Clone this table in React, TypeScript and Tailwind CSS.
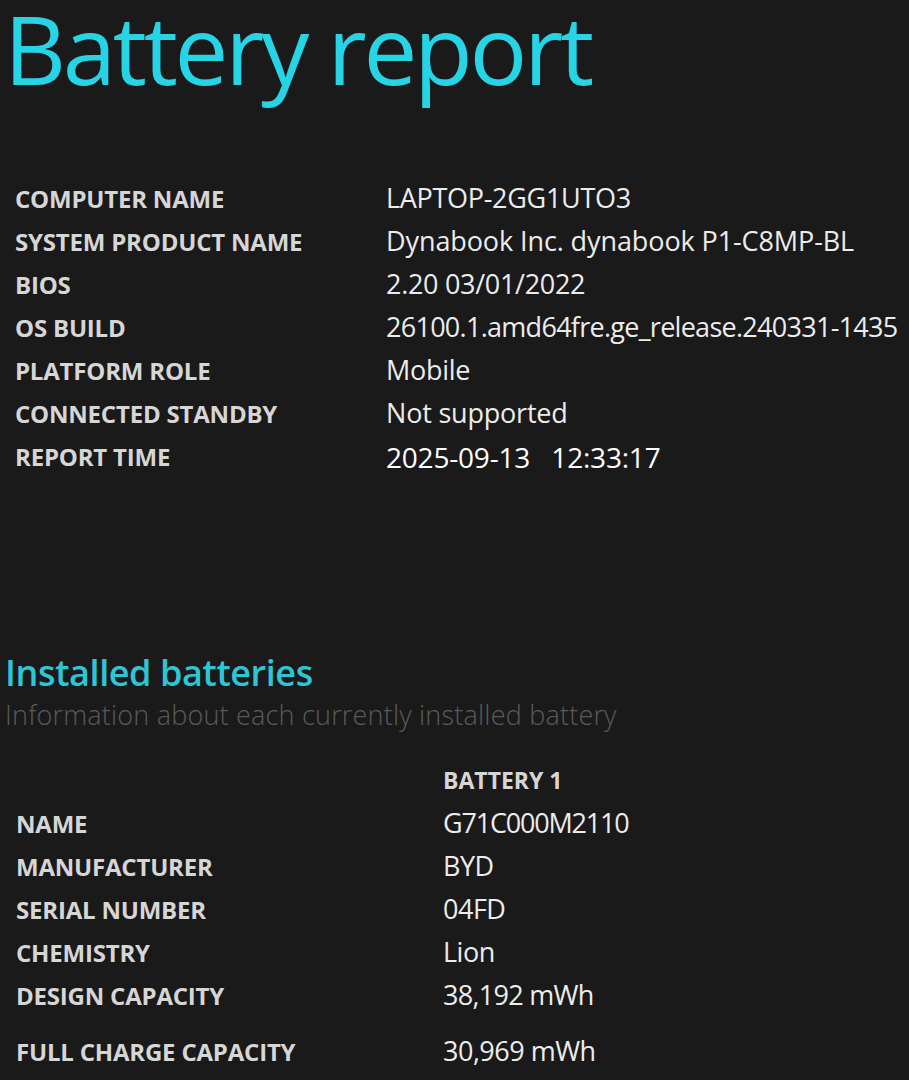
import React from "react";

const info: [string, string, string][] = [
  ["COMPUTER NAME", "LAPTOP-2GG1UTO3", "tracking-[-0.3px]"],
  ["SYSTEM PRODUCT NAME", "Dynabook Inc. dynabook P1-C8MP-BL", "tracking-[-0.1px]"],
  ["BIOS", "2.20 03/01/2022", "tracking-[-0.3px]"],
  ["OS BUILD", "26100.1.amd64fre.ge_release.240331-1435", "tracking-[-0.72px]"],
  ["PLATFORM ROLE", "Mobile", "tracking-[-0.3px]"],
  ["CONNECTED STANDBY", "Not supported", "tracking-[-0.2px]"],
  ["REPORT TIME", "2025-09-13\u00a0\u00a0\u00a012:33:17", "text-[28px] tracking-[-0.2px] text-white"],
];

const bat: [string, string, string, string][] = [
  ["NAME", "G71C000M2110", "", "tracking-[-1.2px]"],
  ["MANUFACTURER", "BYD", "", "tracking-[-0.5px]"],
  ["SERIAL NUMBER", "04FD", "", "tracking-[-0.5px]"],
  ["CHEMISTRY", "Lion", "", "tracking-[-0.5px]"],
  ["DESIGN CAPACITY", "38,192 mWh", "", "tracking-[-0.7px]"],
  ["FULL CHARGE CAPACITY", "30,969 mWh", "mt-[13px]", "tracking-[-0.5px]"],
];

export default function App() {
  return (
    <div className="w-[909px] h-[1080px] overflow-hidden bg-[#1a1a1a] font-['Open_Sans',sans-serif]">
      <h1 className="pl-[4px] text-[96px] leading-none text-[#26d4e6] tracking-[-3.3px]">Battery report</h1>
      <div className="mt-[81px] flex flex-col">
        {info.map(([k, v, c]) => (
          <div key={k} className="flex h-[43px] items-center">
            <div className="w-[386px] pl-[15px] text-[24px] font-bold text-[#d6d6d6] tracking-[-0.2px]">{k}</div>
            <div className={`text-[27px] text-[#ececec] whitespace-nowrap ${c}`}>{v}</div>
          </div>
        ))}
      </div>
      <div className="mt-[175px] pl-[5px]">
        <div className="text-[36px] font-semibold text-[#2ec6d6] leading-[40px] tracking-[-0.4px]">Installed batteries</div>
        <div className="mt-[2px] text-[27px] font-light text-[#5a5a5a] leading-[40px] tracking-[0.2px]">Information about each currently installed battery</div>
      </div>
      <div className="mt-[24px] flex flex-col">
        <div className="flex h-[43px] items-center">
          <div className="w-[443px]"></div>
          <div className="text-[23px] font-bold text-[#d6d6d6]">BATTERY 1</div>
        </div>
        {bat.map(([k, v, m, t]) => (
          <div key={k} className={`flex h-[43px] items-center ${m}`}>
            <div className="w-[443px] pl-[16px] text-[24px] font-bold text-[#d6d6d6] tracking-[-0.2px]">{k}</div>
            <div className={`text-[27px] text-[#ececec] ${t}`}>{v}</div>
          </div>
        ))}
      </div>
    </div>
  );
}
